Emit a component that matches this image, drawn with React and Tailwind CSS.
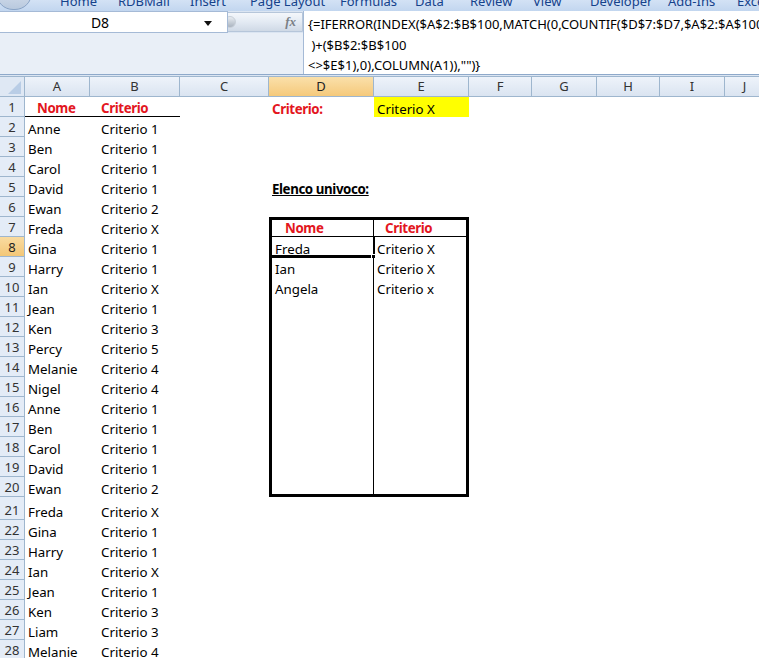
import React from 'react';

const TABS = [
  ['Home', 'w-[58px] ml-[60px]'],
  ['RDBMail', 'w-[72px]'],
  ['Insert', 'w-[60px]'],
  ['Page Layout', 'w-[90px]'],
  ['Formulas', 'w-[75px]'],
  ['Data', 'w-[55px]'],
  ['Review', 'w-[63px]'],
  ['View', 'w-[57px]'],
  ['Developer', 'w-[78px]'],
  ['Add-Ins', 'w-[69px]'],
  ['Excel', 'w-[40px]'],
];

const COLS = [
  ['A', 'w-[65px]'],
  ['B', 'w-[90px]'],
  ['C', 'w-[89px]'],
  ['D', 'w-[105px]'],
  ['E', 'w-[95px]'],
  ['F', 'w-[63px]'],
  ['G', 'w-[65px]'],
  ['H', 'w-[63px]'],
  ['I', 'w-[65px]'],
  ['J', 'w-[40px]'],
];

const DATA = [
  ['Anne', 'Criterio 1'], ['Ben', 'Criterio 1'], ['Carol', 'Criterio 1'], ['David', 'Criterio 1'],
  ['Ewan', 'Criterio 2'], ['Freda', 'Criterio X'], ['Gina', 'Criterio 1'], ['Harry', 'Criterio 1'],
  ['Ian', 'Criterio X'], ['Jean', 'Criterio 1'], ['Ken', 'Criterio 3'], ['Percy', 'Criterio 5'],
  ['Melanie', 'Criterio 4'], ['Nigel', 'Criterio 4'], ['Anne', 'Criterio 1'], ['Ben', 'Criterio 1'],
  ['Carol', 'Criterio 1'], ['David', 'Criterio 1'], ['Ewan', 'Criterio 2'], ['Freda', 'Criterio X'],
  ['Gina', 'Criterio 1'], ['Harry', 'Criterio 1'], ['Ian', 'Criterio X'], ['Jean', 'Criterio 1'],
  ['Ken', 'Criterio 3'], ['Liam', 'Criterio 3'], ['Melanie', 'Criterio 4'],
];

const UNIQUE = { 8: ['Freda', 'Criterio X'], 9: ['Ian', 'Criterio X'], 10: ['Angela', 'Criterio x'] };

// cell borders for the box D7:E20
const dBorder = (r) => {
  if (r === 7) return 'border-l-[3px] border-t-[3px] border-r border-b border-black';
  if (r === 20) return 'border-l-[3px] border-b-[3px] border-r border-black';
  if (r > 7 && r < 20) return 'border-l-[3px] border-r border-black';
  return '';
};
const eBorder = (r) => {
  if (r === 7) return 'border-r-[3px] border-t-[3px] border-b border-black';
  if (r === 20) return 'border-r-[3px] border-b-[3px] border-black';
  if (r > 7 && r < 20) return 'border-r-[3px] border-black';
  return '';
};

const Row = ({ r }) => {
  const tall = r === 21;
  const h = tall ? 'h-[23px]' : 'h-[20px]';
  const cell = `${h} flex items-end leading-[16px] whitespace-nowrap shrink-0`;
  const active = r === 8;
  const [a, b] = r === 1 ? ['Nome', 'Criterio'] : DATA[r - 2] || ['', ''];
  const red = 'text-[#e3161e] font-bold tracking-[-0.4px]';
  let d = '';
  let e = '';
  if (r === 1) { d = <span className={red}>Criterio:</span>; e = 'Criterio X'; }
  if (r === 5) d = <span className="font-bold underline tracking-[-0.4px]">Elenco univoco:</span>;
  if (r === 7) { d = <span className={`${red} pl-[10px]`}>Nome</span>; e = <span className={`${red} pl-[8px]`}>Criterio</span>; }
  if (UNIQUE[r]) { d = UNIQUE[r][0]; e = UNIQUE[r][1]; }

  return (
    <div className="flex">
      <div className={`w-[25px] ${cell} justify-center pb-[1px] border-r border-b border-[#9eb6ce] text-[13px] ${active ? 'bg-gradient-to-b from-[#f9dba0] to-[#f3c777] text-[#222]' : 'bg-[#e4ecf7] text-[#333]'}`}>
        {r}
      </div>
      <div className={`w-[65px] ${cell} pl-[3px] ${r === 1 ? `border-b border-black ${red} pl-[12px]` : ''}`}>{a}</div>
      <div className={`w-[90px] ${cell} pl-[11px] ${r === 1 ? `border-b border-black ${red}` : ''}`}>{b}</div>
      <div className={`w-[89px] ${cell}`} />
      <div className={`w-[105px] ${cell} pl-[3px] relative ${dBorder(r)} ${r > 7 && r <= 20 ? 'pl-[1px]' : ''}`}>
        {d}
        {active && (
          <div className="absolute -left-[1px] -top-[1px] -right-[2px] -bottom-[1px] border border-black border-b-[3px] border-r-2">
            <div className="absolute -right-[3px] -bottom-[4px] w-[5px] h-[5px] bg-black border border-white" />
          </div>
        )}
      </div>
      <div className={`w-[95px] ${cell} pl-[3px] ${r === 1 ? 'bg-[#ffff00]' : ''} ${eBorder(r)}`}>{e}</div>
      <div className="flex-1" />
    </div>
  );
};

export default function App() {
  const rows = Array.from({ length: 28 }, (_, i) => i + 1);
  return (
    <div className="w-[759px] h-[658px] overflow-hidden bg-white text-[13.3px] text-black" style={{ fontFamily: '"Noto Sans", "Open Sans", sans-serif' }}>
      {/* ribbon tabs, cut off at the top */}
      <div className="h-[11px] overflow-hidden bg-gradient-to-b from-[#d3e2f5] to-[#c2d6ef] flex relative">
        <div className="absolute -left-[4px] -top-[24px] w-[36px] h-[34px] rounded-full border border-[#8aa4c6] bg-gradient-to-b from-[#e8eef6] to-[#b9c9de]" />
        {TABS.map(([t, w]) => (
          <div key={t} className={`${w} shrink-0 -mt-[8px] text-[13px] leading-[18px] text-[#15428b] whitespace-nowrap`}>{t}</div>
        ))}
      </div>

      {/* formula bar */}
      <div className="flex h-[64px] bg-[#dbe5f2] border-b border-[#8ea9ca]">
        <div className="w-[303px] shrink-0 flex flex-col">
          <div className="flex h-[22px]">
            <div className="w-[228px] shrink-0 bg-white border-t border-b border-r border-[#a5bad6] flex items-center relative">
              <span className="w-[200px] text-center text-[14px] pt-[1px]">D8</span>
              <svg width="8" height="5" viewBox="0 0 8 5" className="absolute left-[204px] top-[9px]">
                <path d="M0 0 L8 0 L4 5 Z" fill="#111" />
              </svg>
            </div>
            <div className="flex-1 flex items-center bg-[#dbe5f2]">
              <div className="ml-[-10px] h-[20px] flex-1 rounded-l-full bg-gradient-to-b from-[#f4f7fb] via-[#e3eaf3] to-[#cfd9e6] border border-[#b6c6da] flex items-center justify-between pl-[5px] pr-[6px]">
                <div className="w-[12px] h-[12px] rounded-full bg-gradient-to-b from-[#e9edf2] to-[#aab4c0] border border-[#c7cfd8]" />
                <span className="italic font-bold text-[13px] text-[#7a7f86]" style={{ fontFamily: '"Liberation Serif", serif' }}>fx</span>
              </div>
            </div>
          </div>
          <div className="flex-1 bg-[#e9eff7]" />
        </div>
        <div className="flex-1 bg-white border-l border-[#a5bad6] pl-[4px] pt-[3px] leading-[20.5px] whitespace-pre overflow-hidden text-[13px]">
          <div>{'{=IFERROR(INDEX($A$2:$B$100,MATCH(0,COUNTIF($D$7:$D7,$A$2:$A$100'}</div>
          <div>{' )+($B$2:$B$100'}</div>
          <div>{'<>$E$1),0),COLUMN(A1)),"")}'}</div>
        </div>
      </div>

      <div className="h-[2px] bg-[#dbe5f2] border-b border-[#9eb6ce]" />

      {/* column headers */}
      <div className="flex h-[20px]">
        <div className="w-[25px] shrink-0 bg-[#dfe8f4] border-r border-b border-[#9eb6ce] relative overflow-hidden">
          <svg width="25" height="20" className="absolute inset-0">
            <path d="M21 4 L21 17 L8 17 Z" fill="#b9cde6" />
          </svg>
        </div>
        {COLS.map(([c, w]) => (
          <div key={c} className={`${w} shrink-0 flex items-center justify-center pt-[1px] border-r border-b border-[#9eb6ce] text-[13px] ${c === 'D' ? 'bg-gradient-to-b from-[#fae0aa] to-[#f5c97a] text-[#222]' : 'bg-gradient-to-b from-[#eef3fa] to-[#dae4f1] text-[#333]'}`}>
            {c}
          </div>
        ))}
      </div>

      {rows.map((r) => <Row key={r} r={r} />)}
    </div>
  );
}
